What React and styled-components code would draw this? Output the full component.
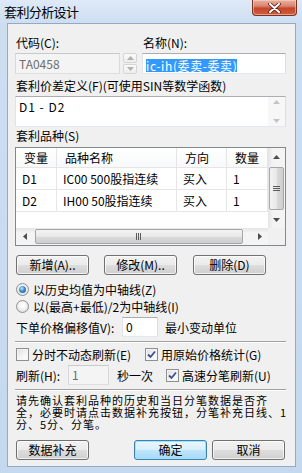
import React from 'react';
import styled, { createGlobalStyle, css } from 'styled-components';

const GlobalStyle = createGlobalStyle`
  html, body {
    margin: 0;
    padding: 0;
  }
  body {
    background: #c6d9ef;
    font-family: "Noto Sans CJK SC", "Noto Sans", sans-serif;
    font-size: 12px;
    color: #000;
  }
`;

const Frame = styled.div`
  width: 302px;
  height: 473px;
  display: flex;
  flex-direction: column;
  background: linear-gradient(180deg, #dfeaf7 0px, #cddef1 23px, #c4d8ee 100%);
`;

const TitleBar = styled.div`
  height: 23px;
  display: flex;
  align-items: flex-start;
  justify-content: space-between;
  padding-left: 4px;
`;

const TitleText = styled.div`
  font-size: 13px;
  line-height: 24px;
  letter-spacing: -0.6px;
`;

const CloseButton = styled.div`
  width: 45px;
  height: 16px;
  margin-right: 5px;
  box-sizing: border-box;
  border: 1px solid #7a3424;
  border-top: none;
  border-radius: 0 0 4px 4px;
  background: linear-gradient(180deg, #eab0a2 0%, #d98670 40%, #c6452b 55%, #cf5f3f 100%);
  box-shadow: inset 0 0 0 1px rgba(255, 220, 210, 0.5);
  display: flex;
  align-items: center;
  justify-content: center;
`;

const Client = styled.div`
  flex: 1;
  margin: 0 6px 6px 7px;
  background: #f0f0f0;
  border: 1px solid #93a9c6;
  padding: 0 9px 0 7px;
  display: flex;
  flex-direction: column;
`;

const TopRow = styled.div`
  margin-top: 11px;
  display: flex;
  gap: 5px;
`;

const Field = styled.div`
  width: ${p => p.$w}px;
  display: flex;
  flex-direction: column;
  gap: 2px;
`;

const Label = styled.div`
  height: 16px;
  line-height: 16px;
  padding-left: 1px;
  white-space: nowrap;
  margin-top: ${p => p.$mt || 0}px;
`;

const InputLine = styled.div`
  display: flex;
  align-items: stretch;
  gap: 3px;
`;

const Input = styled.div`
  width: ${p => (p.$w ? `${p.$w}px` : 'auto')};
  flex: ${p => (p.$w ? 'none' : 1)};
  height: ${p => p.$h || 21}px;
  box-sizing: border-box;
  border: 1px solid #abadb3;
  border-color: #abadb3 #dbdfe6 #e3e9ef #e2e3ea;
  background: #fff;
  padding: 0 3px;
  line-height: ${p => (p.$h || 21) - 2}px;
  white-space: nowrap;
  overflow: hidden;
  ${p =>
    p.$disabled &&
    css`
      background: #f4f4f4;
      border-color: #c9c9c9 #d9d9d9 #dedede #d9d9d9;
      color: #6d6d6d;
    `}
`;

const Selected = styled.span`
  display: inline-block;
  height: 13px;
  line-height: 13px;
  background: #3399ff;
  color: #fff;
  letter-spacing: 0.6px;
  vertical-align: middle;
`;

const Spinner = styled.div`
  width: 14px;
  display: flex;
  flex-direction: column;
  gap: 1px;
`;

const SpinPart = styled.div`
  flex: 1;
  border: 1px solid #d5d5d5;
  border-radius: 2px;
  background: linear-gradient(180deg, #fafafa, #ededed);
  display: flex;
  align-items: center;
  justify-content: center;
`;

const TextArea = styled.div`
  margin-top: 2px;
  height: 31px;
  box-sizing: border-box;
  border: 1px solid #abadb3;
  border-color: #abadb3 #dbdfe6 #e3e9ef #e2e3ea;
  background: #fff;
  display: flex;
`;

const TextAreaBody = styled.div`
  flex: 1;
  padding: 2px 0 0 3px;
  line-height: 15px;
  letter-spacing: 1px;
`;

const ThinScroll = styled.div`
  width: 17px;
  background: #f7f7f7;
  display: flex;
  flex-direction: column;
  justify-content: space-between;
  align-items: center;
  padding: 3px 0;
`;

const ListView = styled.div`
  margin-top: 3px;
  height: 99px;
  box-sizing: border-box;
  border: 1px solid #828790;
  background: #fff;
  display: grid;
  grid-template-columns: 252px 17px;
  grid-template-rows: 80px 17px;
`;

const Table = styled.div`
  display: grid;
  grid-template-columns: 41px 120px 50px 41px;
  grid-auto-rows: 22px;
  grid-template-rows: 20px;
  align-content: start;
  overflow: hidden;
`;

const HeadCell = styled.div`
  border-right: 1px solid #e5e5e5;
  border-bottom: 1px solid #e5e5e5;
  padding-left: 8px;
  line-height: 19px;
  white-space: nowrap;
  background: linear-gradient(180deg, #ffffff, #f8f9fa);
`;

const Cell = styled.div`
  border-right: 1px solid #e6e6e6;
  border-bottom: 1px solid #e6e6e6;
  padding-left: 6px;
  line-height: 21px;
  white-space: nowrap;
`;

const VScroll = styled.div`
  display: flex;
  flex-direction: column;
  background: linear-gradient(90deg, #e4e4e4, #f4f4f4 30%, #f4f4f4);
`;

const HScroll = styled.div`
  display: flex;
  background: linear-gradient(180deg, #e4e4e4, #f4f4f4 30%, #f4f4f4);
`;

const ArrowBox = styled.div`
  width: 17px;
  height: 17px;
  flex: none;
  display: flex;
  align-items: center;
  justify-content: center;
`;

const Thumb = styled.div`
  box-sizing: border-box;
  border: 1px solid #a4a6a8;
  border-radius: 2px;
  display: flex;
  align-items: center;
  justify-content: center;
  ${p =>
    p.$vertical
      ? css`
          width: 15px;
          height: 43px;
          margin: 2px 1px 0;
          background: linear-gradient(90deg, #f3f3f3, #e8e8e8 50%, #d9d9d9 51%, #d0d0d0);
        `
      : css`
          height: 15px;
          width: 208px;
          margin: 1px 0 0 2px;
          background: linear-gradient(180deg, #f3f3f3, #e8e8e8 50%, #d9d9d9 51%, #d0d0d0);
        `}
`;

const Filler = styled.div`
  flex: 1;
`;

const Corner = styled.div`
  background: #f0f0f0;
`;

const ButtonRow = styled.div`
  margin-top: ${p => p.$mt}px;
  padding-left: 1px;
  display: flex;
`;

const Button = styled.div`
  width: 73px;
  height: 20px;
  box-sizing: border-box;
  border: 1px solid #707070;
  border-radius: 3px;
  background: linear-gradient(180deg, #f2f2f2 0%, #ebebeb 48%, #dddddd 52%, #cfcfcf 100%);
  box-shadow: inset 0 0 0 1px rgba(255, 255, 255, 0.7);
  text-align: center;
  line-height: 18px;
  white-space: nowrap;
  margin-left: ${p => p.$ml || 0}px;
  ${p =>
    p.$default &&
    css`
      border-color: #3c7fb1;
      background: linear-gradient(180deg, #eaf6fd 0%, #d9f0fc 48%, #bee6fd 52%, #a7d9f5 100%);
      box-shadow: inset 0 0 0 1px #9ce3fb;
    `}
`;

const OptionLine = styled.div`
  height: 16px;
  margin-top: ${p => p.$mt}px;
  display: flex;
  align-items: center;
  white-space: nowrap;
`;

const Radio = styled.span`
  width: 13px;
  height: 13px;
  margin: 0 4px 0 1px;
  box-sizing: border-box;
  border-radius: 50%;
  border: 1px solid #8e8f8f;
  background: radial-gradient(circle at 50% 40%, #ffffff 20%, #dedede 80%);
  display: inline-flex;
  align-items: center;
  justify-content: center;
  ${p =>
    p.$checked &&
    css`
      &::after {
        content: '';
        width: 7px;
        height: 7px;
        border-radius: 50%;
        background: radial-gradient(circle at 40% 35%, #bfe6ff 0%, #3a8fd1 45%, #0f4f8c 100%);
      }
    `}
`;

const Check = styled.span`
  width: 13px;
  height: 13px;
  margin: 0 3px 0 ${p => p.$ml || 1}px;
  box-sizing: border-box;
  border: 1px solid #8e8f8f;
  background: linear-gradient(135deg, #dcdcdc, #f6f6f6 60%, #ffffff);
  box-shadow: inset 0 0 0 1px #f4f4f4;
  display: inline-flex;
  align-items: center;
  justify-content: center;
`;

const FormLine = styled.div`
  margin-top: ${p => p.$mt}px;
  display: flex;
  align-items: center;
  white-space: nowrap;
`;

const FixedText = styled.span`
  width: ${p => p.$w}px;
  flex: none;
  padding-left: ${p => p.$pl || 0}px;
  box-sizing: border-box;
`;

const Separator = styled.div`
  margin-top: ${p => p.$mt}px;
  height: 0;
  border-top: 1px solid #a0a0a0;
  border-bottom: 1px solid #ffffff;
`;

const Note = styled.div`
  margin-top: 3px;
  padding-left: 1px;
  font-size: 11px;
  letter-spacing: 1px;
  line-height: 12px;
  white-space: nowrap;
`;

const Arrow = ({ dir, color = '#4d4d4d' }) => {
  const pts = {
    up: '0,4 3.5,0 7,4',
    down: '0,0 3.5,4 7,0',
    left: '4,0 0,3.5 4,7',
    right: '0,0 4,3.5 0,7',
  }[dir];
  const vertical = dir === 'up' || dir === 'down';
  return (
    <svg width={vertical ? 7 : 4} height={vertical ? 4 : 7} viewBox={vertical ? '0 0 7 4' : '0 0 4 7'}>
      <polygon points={pts} fill={color} />
    </svg>
  );
};

const Grip = ({ vertical }) => (
  <svg width={vertical ? 7 : 6} height={vertical ? 6 : 7}>
    {[0, 2, 4].map(i =>
      vertical ? (
        <rect key={i} x="0" y={i} width="7" height="1" fill="#5b5b5b" />
      ) : (
        <rect key={i} x={i} y="0" width="1" height="7" fill="#5b5b5b" />
      )
    )}
  </svg>
);

const CheckMark = () => (
  <svg width="9" height="9" viewBox="0 0 9 9">
    <path d="M1 4.5 L3.5 7 L8 1.5" fill="none" stroke="#3c4e8d" strokeWidth="1.8" />
  </svg>
);

const columns = ['变量', '品种名称', '方向', '数量'];
const rows = [
  ['D1', 'IC00 500股指连续', '买入', '1'],
  ['D2', 'IH00 50股指连续', '买入', '1'],
];

export default function App() {
  return (
    <>
      <GlobalStyle />
      <Frame>
        <TitleBar>
          <TitleText>套利分析设计</TitleText>
          <CloseButton>
            <svg width="13" height="10" viewBox="0 0 13 10">
              <path d="M2 1 L11 9 M11 1 L2 9" stroke="#5a1d12" strokeWidth="3.6" strokeLinecap="round" />
              <path d="M2 1 L11 9 M11 1 L2 9" stroke="#ffffff" strokeWidth="2" strokeLinecap="round" />
            </svg>
          </CloseButton>
        </TitleBar>

        <Client>
          <TopRow>
            <Field $w={122}>
              <Label>代码(C):</Label>
              <InputLine>
                <Input $w={105} $disabled>TA0458</Input>
                <Spinner>
                  <SpinPart><Arrow dir="up" color="#b0b0b0" /></SpinPart>
                  <SpinPart><Arrow dir="down" color="#b0b0b0" /></SpinPart>
                </Spinner>
              </InputLine>
            </Field>
            <Field $w={144}>
              <Label>名称(N):</Label>
              <Input>
                <Selected>ic-ih(委卖-委卖)</Selected>
              </Input>
            </Field>
          </TopRow>

          <Label $mt={4}>套利价差定义(F)(可使用SIN等数学函数)</Label>
          <TextArea>
            <TextAreaBody>D1 - D2</TextAreaBody>
            <ThinScroll>
              <Arrow dir="up" color="#c4c4c4" />
              <Arrow dir="down" color="#c4c4c4" />
            </ThinScroll>
          </TextArea>

          <Label $mt={1}>套利品种(S)</Label>
          <ListView>
            <Table>
              {columns.map(c => (
                <HeadCell key={c}>{c}</HeadCell>
              ))}
              {rows.map(r => r.map((v, i) => <Cell key={r[0] + i}>{v}</Cell>))}
            </Table>
            <VScroll>
              <ArrowBox><Arrow dir="up" /></ArrowBox>
              <Thumb $vertical><Grip vertical /></Thumb>
              <Filler />
              <ArrowBox><Arrow dir="down" /></ArrowBox>
            </VScroll>
            <HScroll>
              <ArrowBox><Arrow dir="left" /></ArrowBox>
              <Thumb><Grip /></Thumb>
              <Filler />
              <ArrowBox><Arrow dir="right" /></ArrowBox>
            </HScroll>
            <Corner />
          </ListView>

          <ButtonRow $mt={9}>
            <Button>新增(A)..</Button>
            <Button $ml={15}>修改(M)..</Button>
            <Button $ml={16}>删除(D)</Button>
          </ButtonRow>

          <OptionLine $mt={6}>
            <Radio $checked />
            以历史均值为中轴线(Z)
          </OptionLine>
          <OptionLine $mt={1}>
            <Radio />
            以(最高+最低)/2为中轴线(I)
          </OptionLine>

          <FormLine $mt={3}>
            <FixedText $w={107} $pl={1}>下单价格偏移值V):</FixedText>
            <Input $w={36} $h={20}>0</Input>
            <FixedText $w={0} $pl={7}>最小变动单位</FixedText>
          </FormLine>

          <Separator $mt={4} />

          <OptionLine $mt={3}>
            <Check />
            <FixedText $w={112}>分时不动态刷新(E)</FixedText>
            <Check $ml={1}><CheckMark /></Check>
            用原始价格统计(G)
          </OptionLine>

          <FormLine $mt={3}>
            <FixedText $w={53} $pl={1}>刷新(H):</FixedText>
            <Input $w={41} $h={20} $disabled>1</Input>
            <FixedText $w={56} $pl={8}>秒一次</FixedText>
            <Check><CheckMark /></Check>
            高速分笔刷新(U)
          </FormLine>

          <Separator $mt={4} />

          <Note>
            请先确认套利品种的历史和当日分笔数据是否齐
            <br />
            全，必要时请点击数据补充按钮，分笔补充日线、1
            <br />
            分、5分、分笔。
          </Note>

          <ButtonRow $mt={10}>
            <Button>数据补充</Button>
            <Button $ml={45} $default>确定</Button>
            <Button $ml={5}>取消</Button>
          </ButtonRow>
        </Client>
      </Frame>
    </>
  );
}
